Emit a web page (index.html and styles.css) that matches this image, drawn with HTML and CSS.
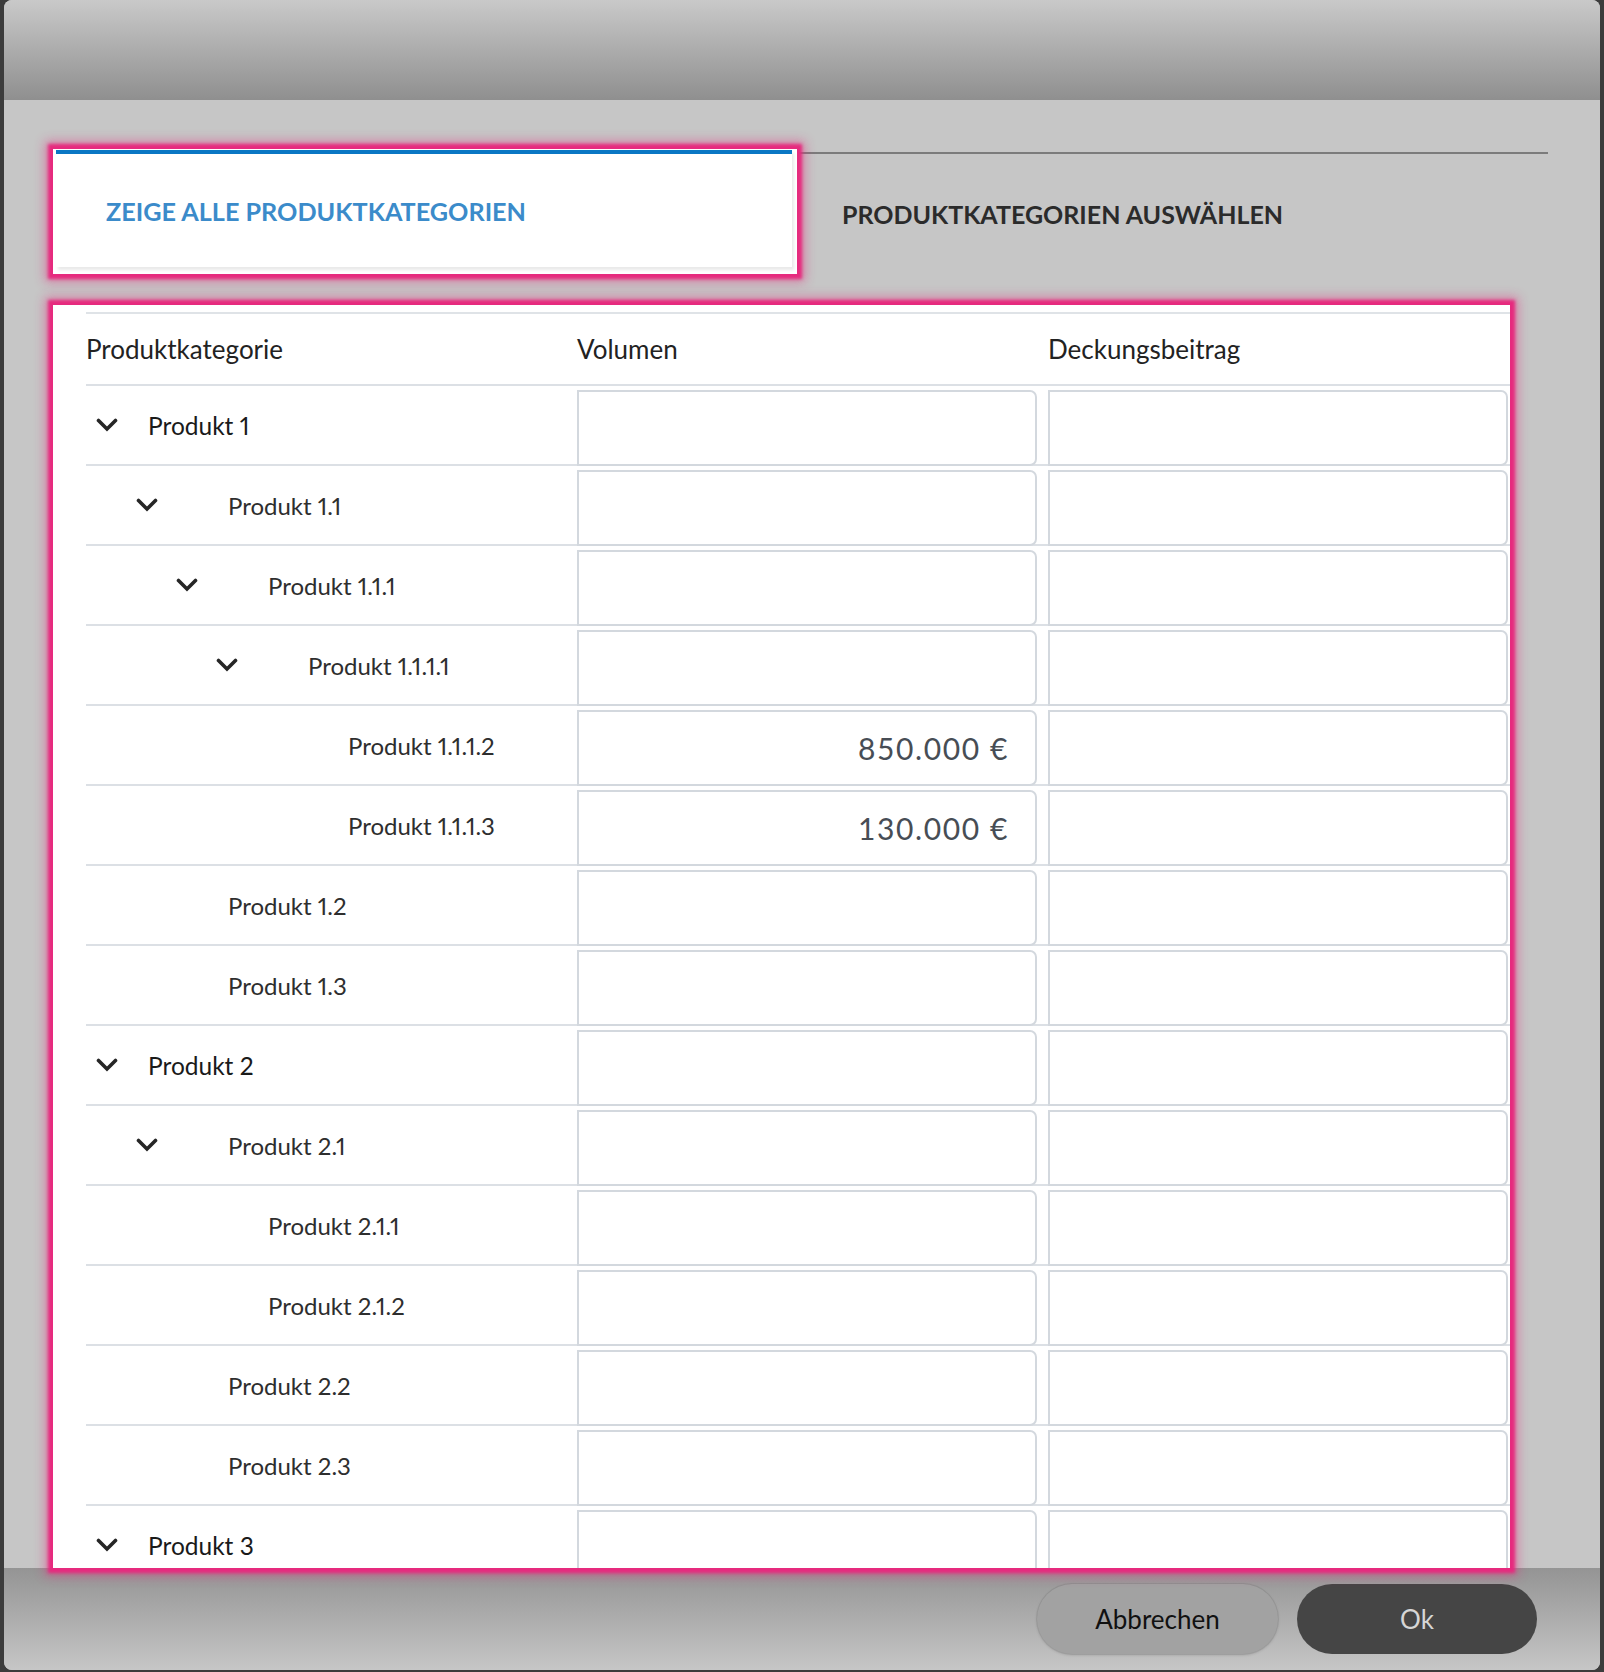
FILE: index.html
```html
<!DOCTYPE html>
<html lang="de">
<head>
<meta charset="utf-8">
<title>Produktkategorien</title>
<link rel="stylesheet" href="styles.css">
</head>
<body>
<div class="window">
  <div class="header"></div>
  <div class="main">
    <div class="tabs">
      <div class="tab-hl">
        <div class="tab tab-active">ZEIGE ALLE PRODUKTKATEGORIEN</div>
      </div>
      <div class="tab-other">PRODUKTKATEGORIEN AUSWÄHLEN</div>
    </div>
    <div class="panel">
      <div class="table">
        <div class="thead">
          <div class="th">Produktkategorie</div>
          <div class="th">Volumen</div>
          <div class="th">Deckungsbeitrag</div>
        </div>

        <div class="row">
          <div class="tree lv0"><span class="twisty"><svg viewBox="0 0 22 14" width="22" height="14"><polyline points="2.5,2.5 11,11 19.5,2.5"/></svg></span><span class="label">Produkt 1</span></div>
          <div class="inp"></div><div class="inp"></div>
        </div>
        <div class="row">
          <div class="tree lv1"><span class="twisty"><svg viewBox="0 0 22 14" width="22" height="14"><polyline points="2.5,2.5 11,11 19.5,2.5"/></svg></span><span class="label">Produkt 1.1</span></div>
          <div class="inp"></div><div class="inp"></div>
        </div>
        <div class="row">
          <div class="tree lv2"><span class="twisty"><svg viewBox="0 0 22 14" width="22" height="14"><polyline points="2.5,2.5 11,11 19.5,2.5"/></svg></span><span class="label">Produkt 1.1.1</span></div>
          <div class="inp"></div><div class="inp"></div>
        </div>
        <div class="row">
          <div class="tree lv3"><span class="twisty"><svg viewBox="0 0 22 14" width="22" height="14"><polyline points="2.5,2.5 11,11 19.5,2.5"/></svg></span><span class="label">Produkt 1.1.1.1</span></div>
          <div class="inp"></div><div class="inp"></div>
        </div>
        <div class="row">
          <div class="tree lv4"><span class="twisty"></span><span class="label">Produkt 1.1.1.2</span></div>
          <div class="inp">850.000 €</div><div class="inp"></div>
        </div>
        <div class="row">
          <div class="tree lv4"><span class="twisty"></span><span class="label">Produkt 1.1.1.3</span></div>
          <div class="inp">130.000 €</div><div class="inp"></div>
        </div>
        <div class="row">
          <div class="tree lv1"><span class="twisty"></span><span class="label">Produkt 1.2</span></div>
          <div class="inp"></div><div class="inp"></div>
        </div>
        <div class="row">
          <div class="tree lv1"><span class="twisty"></span><span class="label">Produkt 1.3</span></div>
          <div class="inp"></div><div class="inp"></div>
        </div>
        <div class="row">
          <div class="tree lv0"><span class="twisty"><svg viewBox="0 0 22 14" width="22" height="14"><polyline points="2.5,2.5 11,11 19.5,2.5"/></svg></span><span class="label">Produkt 2</span></div>
          <div class="inp"></div><div class="inp"></div>
        </div>
        <div class="row">
          <div class="tree lv1"><span class="twisty"><svg viewBox="0 0 22 14" width="22" height="14"><polyline points="2.5,2.5 11,11 19.5,2.5"/></svg></span><span class="label">Produkt 2.1</span></div>
          <div class="inp"></div><div class="inp"></div>
        </div>
        <div class="row">
          <div class="tree lv2"><span class="twisty"></span><span class="label">Produkt 2.1.1</span></div>
          <div class="inp"></div><div class="inp"></div>
        </div>
        <div class="row">
          <div class="tree lv2"><span class="twisty"></span><span class="label">Produkt 2.1.2</span></div>
          <div class="inp"></div><div class="inp"></div>
        </div>
        <div class="row">
          <div class="tree lv1"><span class="twisty"></span><span class="label">Produkt 2.2</span></div>
          <div class="inp"></div><div class="inp"></div>
        </div>
        <div class="row">
          <div class="tree lv1"><span class="twisty"></span><span class="label">Produkt 2.3</span></div>
          <div class="inp"></div><div class="inp"></div>
        </div>
        <div class="row">
          <div class="tree lv0"><span class="twisty"><svg viewBox="0 0 22 14" width="22" height="14"><polyline points="2.5,2.5 11,11 19.5,2.5"/></svg></span><span class="label">Produkt 3</span></div>
          <div class="inp"></div><div class="inp"></div>
        </div>
      </div>
    </div>
  </div>
  <div class="footer">
    <button class="btn btn-cancel">Abbrechen</button>
    <button class="btn btn-ok">Ok</button>
  </div>
</div>
</body>
</html>
```

FILE: styles.css
```css
html, body {
  margin: 0;
  padding: 0;
}
body {
  background: #3c3c3c;
  font-family: "Lato", "Open Sans", sans-serif;
  height: 1672px;
  overflow: hidden;
}
.window {
  margin-left: 4px;
  width: 1596px;
  height: 1670px;
  border-radius: 8px;
  overflow: hidden;
  display: flex;
  flex-direction: column;
  background: #c6c6c6;
}
.header {
  flex: none;
  height: 100px;
  background: linear-gradient(#c9c9c9, #8f8f8f);
}
.main {
  flex: 1;
  min-height: 0;
  padding: 49px 52px 0 49px;
  display: flex;
  flex-direction: column;
  gap: 31px;
}
.tabs {
  display: flex;
  height: 125px;
  flex: none;
}
.tab-hl {
  width: 744px;
  box-sizing: border-box;
  background: #fff;
  padding: 1px 5px 7px 3px;
  box-shadow: 0 0 3px 5px #e62a7e, 0 0 10px 8px rgba(230, 42, 126, 0.45);
  position: relative;
  z-index: 1;
}
.tab {
  height: 100%;
  box-sizing: border-box;
  border-top: 4px solid #0a77c4;
  box-shadow: 2px 3px 3px rgba(0, 0, 0, 0.09);
  display: flex;
  align-items: center;
  padding-left: 50px;
  font-weight: 700;
  font-size: 25.2px;
  color: #3b8bca;
}
.tab-other {
  flex: 1;
  margin-top: 3px;
  border-top: 2px solid #7b7b7b;
  display: flex;
  align-items: center;
  padding-left: 45px;
  font-weight: 700;
  font-size: 25px;
  color: #2b2b2b;
}
.panel {
  flex: none;
  width: 1457px;
  height: 1263px;
  box-sizing: border-box;
  background: #fff;
  box-shadow: 0 0 3px 5px #e62a7e, 0 0 10px 8px rgba(230, 42, 126, 0.45);
  position: relative;
  z-index: 1;
  overflow: hidden;
  padding: 7px 0 0 33px;
}
.table {
  width: 1424px;
  border-top: 2px solid #dfe3e7;
}
.thead, .row {
  display: grid;
  grid-template-columns: 480px 460px 460px;
  column-gap: 11px;
  border-bottom: 2px solid #dce0e5;
}
.thead {
  height: 70px;
  align-items: center;
}
.th {
  font-size: 26px;
  color: #222;
}
.row {
  height: 78px;
}
.tree {
  display: flex;
  align-items: center;
}
.twisty {
  width: 22px;
  height: 14px;
  flex: none;
  display: flex;
}
.twisty svg {
  display: block;
}
.twisty polyline {
  fill: none;
  stroke: #262626;
  stroke-width: 3.6;
  stroke-linecap: round;
  stroke-linejoin: miter;
}
.label {
  font-size: 24px;
  color: #2e2e2e;
  margin-left: 70px;
  white-space: nowrap;
  font-variant-numeric: proportional-nums;
}
.lv0 { padding-left: 10px; }
.lv0 .label { margin-left: 30px; color: #1a1a1a; font-size: 24.5px; }
.lv1 { padding-left: 50px; }
.lv2 { padding-left: 90px; }
.lv3 { padding-left: 130px; }
.lv4 { padding-left: 170px; }
.inp {
  margin: 4px 0 -2px 0;
  border: 2px solid #d3d8de;
  border-radius: 0 7px 7px 0;
  box-sizing: border-box;
  display: flex;
  align-items: center;
  justify-content: flex-end;
  padding-right: 26px;
  font-size: 30px;
  letter-spacing: 1.6px;
  color: #474d55;
  background: #fff;
}
.footer {
  flex: none;
  height: 102px;
  box-sizing: border-box;
  background: linear-gradient(#949494, #c6c6c6);
  display: flex;
  justify-content: flex-end;
  align-items: flex-start;
  padding: 16px 63px 0 0;
  gap: 19px;
}
.btn {
  height: 70px;
  border-radius: 35px;
  border: none;
  font-family: "Lato", "Open Sans", sans-serif;
  font-size: 26px;
  padding: 0;
  cursor: pointer;
}
.btn-cancel {
  width: 241px;
  background: #a2a2a2;
  color: #111;
  box-shadow: 0 0 0 1px rgba(0, 0, 0, 0.06), 0 1px 3px rgba(0, 0, 0, 0.18);
}
.btn-ok {
  width: 240px;
  background: #454545;
  color: #d6d6d6;
}
```
